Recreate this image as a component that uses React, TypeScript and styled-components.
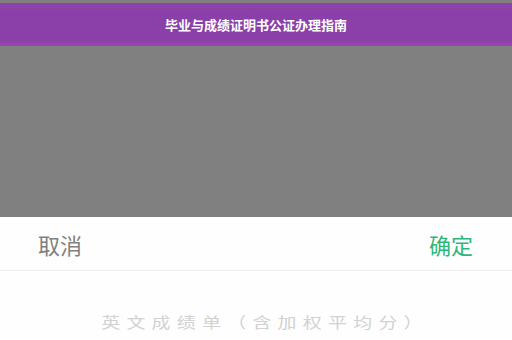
import React from "react";
import styled, { createGlobalStyle } from "styled-components";

const GlobalStyle = createGlobalStyle`
  html, body {
    margin: 0;
    padding: 0;
    width: 512px;
    height: 340px;
    overflow: hidden;
    background: #808080;
    font-family: "Noto Sans CJK SC", "Noto Sans", sans-serif;
  }
`;

const Page = styled.div`
  width: 512px;
  height: 340px;
  display: flex;
  flex-direction: column;
  padding-top: 3px;
  box-sizing: border-box;
  overflow: hidden;
`;

const TitleBar = styled.div`
  height: 43px;
  flex-shrink: 0;
  background: linear-gradient(#9043ad 0%, #8a40a8 20%, #8a40a8 85%, #9a45b2 100%);
  color: #fff;
  display: flex;
  align-items: center;
  justify-content: center;
  font-size: 13px;
  font-weight: 700;
`;

const Mask = styled.div`
  height: 171px;
  flex-shrink: 0;
  background: #808080;
`;

const Sheet = styled.div`
  flex: 1;
  background: #fefefe;
  display: flex;
  flex-direction: column;
`;

const Header = styled.div`
  height: 53px;
  display: flex;
  align-items: center;
  justify-content: space-between;
  padding: 0 39px 0 38px;
  border-bottom: 1px solid #f0f0f0;
  flex-shrink: 0;
`;

const Action = styled.span<{ $primary?: boolean }>`
  font-size: 22px;
  color: ${(p) => (p.$primary ? "#2fb77a" : "#808080")};
  line-height: 1;
`;

const Options = styled.div`
  display: flex;
  flex-direction: column;
  align-items: center;
  padding-top: 40px;
  gap: 28px;
`;

const Option = styled.div`
  font-size: 19px;
  letter-spacing: 6.2px;
  padding-left: 18px;
  color: #d2d2d2;
  line-height: 22px;
  white-space: nowrap;
  transform: scaleY(0.8);
`;

export default function App() {
  return (
    <>
      <GlobalStyle />
      <Page>
        <TitleBar>毕业与成绩证明书公证办理指南</TitleBar>
        <Mask />
        <Sheet>
          <Header>
            <Action>取消</Action>
            <Action $primary>确定</Action>
          </Header>
          <Options>
            <Option>英文成绩单（含加权平均分）</Option>
            <Option>中文成绩单（含加权平均分）</Option>
          </Options>
        </Sheet>
      </Page>
    </>
  );
}
